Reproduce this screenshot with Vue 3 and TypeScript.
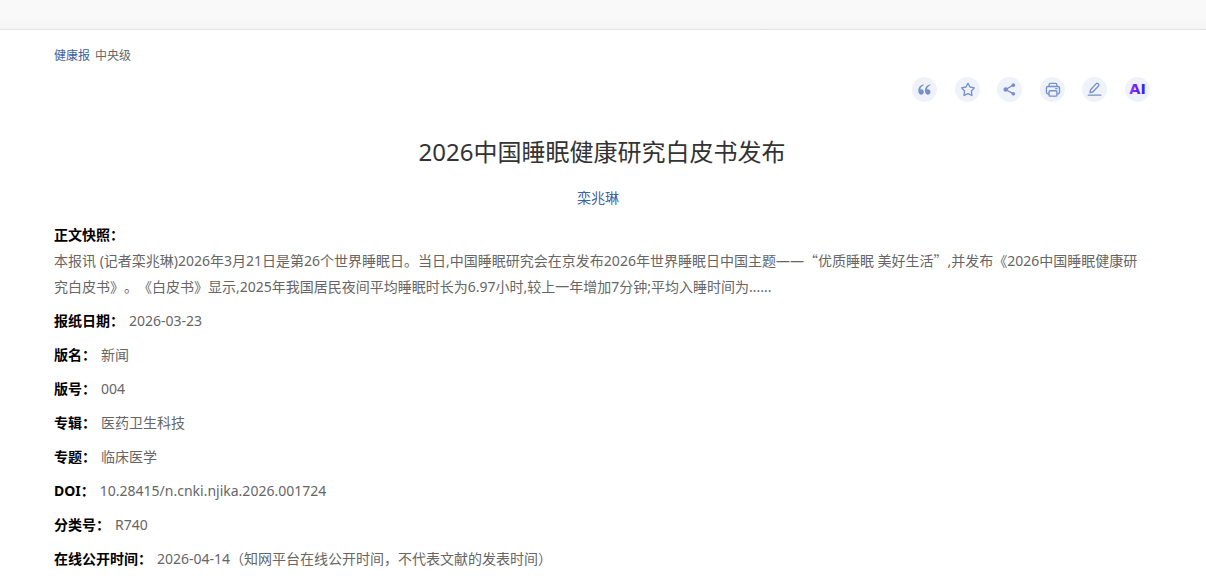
<script setup lang="ts">
type IconName = 'quote' | 'star' | 'share' | 'print' | 'note' | 'ai'

interface Action {
  icon: IconName
  label: string
}

interface Field {
  label: string
  value: string
}

const actions: Action[] = [
  { icon: 'quote', label: '引用' },
  { icon: 'star', label: '收藏' },
  { icon: 'share', label: '分享' },
  { icon: 'print', label: '打印' },
  { icon: 'note', label: '记笔记' },
  { icon: 'ai', label: 'AI' },
]

const fields: Field[] = [
  { label: '报纸日期：', value: '2026-03-23' },
  { label: '版名：', value: '新闻' },
  { label: '版号：', value: '004' },
  { label: '专辑：', value: '医药卫生科技' },
  { label: '专题：', value: '临床医学' },
  { label: 'DOI：', value: '10.28415/n.cnki.njika.2026.001724' },
  { label: '分类号：', value: 'R740' },
  { label: '在线公开时间：', value: '2026-04-14（知网平台在线公开时间，不代表文献的发表时间）' },
]
</script>

<template>
  <div class="page">
    <header class="topbar"></header>
    <main class="article">
      <div class="source">
        <a href="#">健康报</a>
        <span>中央级</span>
      </div>

      <div class="actions">
        <button v-for="a in actions" :key="a.icon" type="button" class="action" :aria-label="a.label">
          <svg viewBox="0 0 26 26" aria-hidden="true">
            <g v-if="a.icon === 'quote'" class="solid">
              <path d="M12 7.600C8.400 8.400 6.500 11 6.500 14.400C6.500 16.900 7.800 18.400 9.400 18.400C11.100 18.400 12.300 17.200 12.300 15.500C12.300 13.900 11.200 12.800 9.700 12.800C9.200 12.800 8.900 12.900 8.600 13C8.900 11 10.100 9.400 12.200 8.600Z" />
              <path d="M18.900 7.600C15.300 8.400 13.400 11 13.400 14.400C13.400 16.900 14.700 18.400 16.300 18.400C18 18.400 19.200 17.200 19.200 15.500C19.200 13.900 18.100 12.800 16.600 12.800C16.100 12.800 15.800 12.900 15.500 13C15.800 11 17 9.400 19.100 8.600Z" />
            </g>
            <path v-else-if="a.icon === 'star'" class="line" d="M13.500 6.600L15.600 10.400L20.100 11.300L17.100 14.600L17.600 19.200L13.500 17.300L9.400 19.200L9.900 14.600L6.900 11.300L11.400 10.400Z" />
            <g v-else-if="a.icon === 'share'">
              <path class="line" d="M17 8.500L9 13L17 17.500" />
              <g class="solid">
                <circle cx="9" cy="13" r="2.300" />
                <circle cx="17" cy="8.500" r="1.900" />
                <circle cx="17" cy="17.500" r="1.900" />
              </g>
            </g>
            <g v-else-if="a.icon === 'print'" class="line">
              <path d="M9.500 9.500V8Q9.500 6.700 10.800 6.700H16.200Q17.500 6.700 17.500 8V9.500" />
              <path d="M9 17.500H8.300Q6.700 17.500 6.700 15.900V11.500Q6.700 9.900 8.300 9.900H18.700Q20.300 9.900 20.300 11.500V15.900Q20.300 17.500 18.700 17.500H18" />
              <rect x="9.400" y="14.300" width="8.200" height="5.600" rx="1" />
              <path d="M16.300 12.100H17.700" />
            </g>
            <g v-else-if="a.icon === 'note'" class="line">
              <path d="M8.300 16.300L8.900 13.300L14.800 6.900Q15.700 6.100 16.600 6.900L17.200 7.500Q18 8.400 17.200 9.300L11.200 15.600Z" />
              <path d="M6.500 18.900H19.500" />
            </g>
            <g v-else>
              <defs>
                <linearGradient id="ai-fill" x1="0" y1="0" x2="1" y2="0">
                  <stop offset="0" stop-color="#9a3cff" />
                  <stop offset="0.500" stop-color="#651df0" />
                  <stop offset="1" stop-color="#2424ff" />
                </linearGradient>
              </defs>
              <text class="ai" x="13" y="18" text-anchor="middle" fill="url(#ai-fill)">AI</text>
            </g>
          </svg>
        </button>
      </div>

      <h1>2026中国睡眠健康研究白皮书发布</h1>
      <p class="author"><a href="#">栾兆琳</a></p>

      <section class="snapshot">
        <h2>正文快照：</h2>
        <p>本报讯 (记者栾兆琳)2026年3月21日是第26个世界睡眠日。当日,中国睡眠研究会在京发布2026年世界睡眠日中国主题——<span class="cjk">“</span>优质睡眠 美好生活<span class="cjk">”</span>,并发布《2026中国睡眠健康研究白皮书》。《白皮书》显示,2025年我国居民夜间平均睡眠时长为6.97小时,较上一年增加7分钟;平均入睡时间为......</p>
      </section>

      <dl>
        <div v-for="f in fields" :key="f.label" class="field">
          <dt>{{ f.label }}</dt>
          <dd>{{ f.value }}</dd>
        </div>
      </dl>
    </main>
  </div>
</template>

<style>
body {
  background: #fff;
  overflow: hidden;
}
</style>

<style scoped>
.page {
  font-family: "Noto Sans", "Noto Sans CJK SC", sans-serif;
  font-size: 14px;
  line-height: 26px;
  color: #666;
  text-spacing-trim: space-all;
}
.topbar {
  height: 29px;
  border-bottom: 1px solid #e2e2e2;
  background: linear-gradient(#f9f9f9 60%, #f4f4f4);
}
.article {
  padding: 16px 56px 0 54px;
}
a {
  color: #43619f;
  text-decoration: none;
}
.source {
  display: flex;
  gap: 5px;
  font-size: 12px;
  line-height: 20px;
}
.actions {
  display: flex;
  justify-content: space-between;
  width: 238px;
  margin: 11px 0 0 auto;
}
.action {
  width: 25px;
  height: 25px;
  padding: 0;
  border: 0;
  border-radius: 50%;
  background: #eff2f9;
  cursor: pointer;
}
.action svg {
  display: block;
  width: 25px;
  height: 25px;
}
.solid {
  fill: #7590cd;
}
.line {
  fill: none;
  stroke: #7590cd;
  stroke-width: 1.4;
  stroke-linejoin: round;
  stroke-linecap: round;
}
.ai {
  font-family: "DejaVu Sans", sans-serif;
  font-size: 15px;
  font-weight: 700;
}
h1 {
  margin: 32px 0 0;
  font-size: 24px;
  font-weight: 400;
  line-height: 36px;
  text-align: center;
  color: #333;
}
.author {
  margin: 15px 0 0;
  padding-right: 8px;
  text-align: center;
}
.snapshot {
  margin-top: 11px;
}
h2 {
  margin: 0;
  font-size: 14px;
  font-weight: 700;
  line-height: 26px;
  color: #000;
}
.snapshot p {
  margin: 0;
}
.cjk {
  font-family: "Noto Sans CJK SC", sans-serif;
  line-height: 1;
}
dl {
  margin: 8px 0 0;
}
.field {
  display: flex;
  gap: 5px;
  margin-bottom: 8px;
}
dt {
  font-weight: 700;
  color: #000;
}
dd {
  margin: 0;
}
</style>
